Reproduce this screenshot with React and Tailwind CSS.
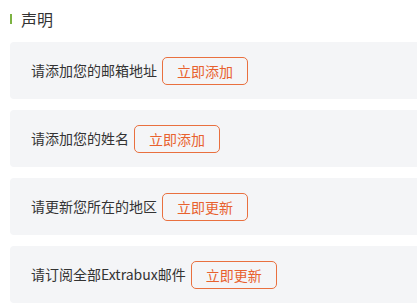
import React from 'react';

const items = [
  { text: '请添加您的邮箱地址', action: '立即添加' },
  { text: '请添加您的姓名', action: '立即添加' },
  { text: '请更新您所在的地区', action: '立即更新' },
  { text: '请订阅全部Extrabux邮件', action: '立即更新' },
];

const App = () => {
  return (
    <div
      className="w-[417px] h-[307px] overflow-hidden bg-white pl-[10px]"
      style={{ fontFamily: '"Noto Sans CJK SC", "Noto Sans", sans-serif' }}
    >
      <div className="mt-[7px] h-[24px] flex items-center">
        <span className="w-[2px] h-[10px] bg-[#7cb342]" />
        <h2 className="ml-[9px] text-[16px] leading-[24px] text-[#333]">声明</h2>
      </div>

      <div className="mt-[11px] flex flex-col gap-[11px] w-[440px]">
        {items.map((item, idx) => (
          <div key={idx} className="h-[57px] rounded-[4px] bg-[#f4f5f7] flex items-center pl-[21px]">
            <span className="text-[14px] text-[#333]">{item.text}</span>
            <button className="ml-[5px] h-[28px] px-[14px] border border-[#e9703f] rounded-[5px] text-[14px] text-[#e8612e] bg-transparent leading-none">
              {item.action}
            </button>
          </div>
        ))}
      </div>
    </div>
  );
};

export default App;
